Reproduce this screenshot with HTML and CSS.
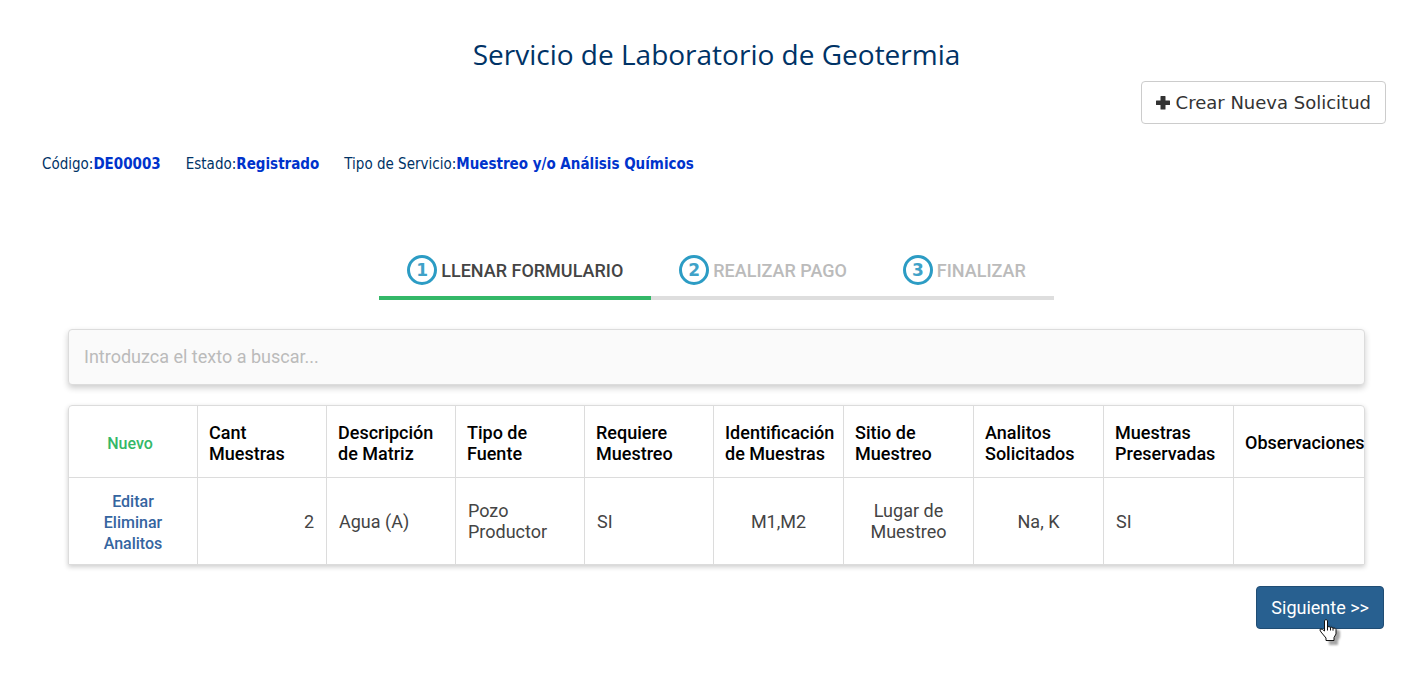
FILE: index.html
```html
<!DOCTYPE html>
<html lang="es">
<head>
    <meta charset="UTF-8">
    <meta name="viewport" content="width=device-width, initial-scale=1.0">
    <title>Servicio de Laboratorio de Geotermia</title>
    <link rel="stylesheet" href="styles.css">
</head>
<body>
    <main class="page">
        <h1>Servicio de Laboratorio de Geotermia</h1>

        <div class="toolbar">
            <button class="btn btn-default" type="button">
                <svg class="icon-plus" viewBox="0 0 14 14" aria-hidden="true"><path d="M5 0h4q.5 0 .5.500v4h4q.5 0 .5.500v3.500q0 .5-.5.500h-4v4q0 .5-.5.500H5q-.5 0-.5-.5V9H.5Q0 9 0 8.500V5q0-.5.500-.5h4v-4Q4.500 0 5 0z"/></svg>
                Crear Nueva Solicitud
            </button>
        </div>

        <div class="info">
            <span>Código:<b>DE00003</b></span>
            <span>Estado:<b>Registrado</b></span>
            <span>Tipo de Servicio:<b>Muestreo y/o Análisis Químicos</b></span>
        </div>

        <div class="content">
            <ol class="steps">
                <li class="step active"><span class="step-num">1</span>LLENAR FORMULARIO</li>
                <li class="step"><span class="step-num">2</span>REALIZAR PAGO</li>
                <li class="step"><span class="step-num">3</span>FINALIZAR</li>
            </ol>

            <input class="search" type="text" aria-label="Buscar" placeholder="Introduzca el texto a buscar...">

            <div class="grid">
                <table>
                    <colgroup>
                        <col class="col-first">
                        <col class="col-a" span="4">
                        <col class="col-b" span="4">
                        <col>
                    </colgroup>
                    <thead>
                        <tr>
                            <th class="center"><a class="new" href="#">Nuevo</a></th>
                            <th>Cant Muestras</th>
                            <th>Descripción de Matriz</th>
                            <th>Tipo de Fuente</th>
                            <th>Requiere Muestreo</th>
                            <th>Identificación de Muestras</th>
                            <th>Sitio de Muestreo</th>
                            <th>Analitos Solicitados</th>
                            <th>Muestras Preservadas</th>
                            <th>Observaciones</th>
                        </tr>
                    </thead>
                    <tbody>
                        <tr>
                            <td class="actions">
                                <a href="#">Editar</a>
                                <a href="#">Eliminar</a>
                                <a href="#">Analitos</a>
                            </td>
                            <td class="number">2</td>
                            <td>Agua (A)</td>
                            <td>Pozo Productor</td>
                            <td>SI</td>
                            <td class="center">M1,M2</td>
                            <td class="center">Lugar de Muestreo</td>
                            <td class="center">Na, K</td>
                            <td>SI</td>
                            <td></td>
                        </tr>
                    </tbody>
                </table>
            </div>
        </div>

        <div class="footer">
            <button class="btn btn-primary" type="button">Siguiente &gt;&gt;
                <svg class="pointer" viewBox="0 0 24 30" aria-hidden="true">
                    <path class="pointer-shadow" d="M9 8v8l-2-2-2 1 5 9v3h9v-4l2-4v-6l-2-1-2-1-3-1-2-1V8z"/>
                    <path class="pointer-hand" d="M5.500 2.500q1.500-2 3 0V9q1.500-1.200 3 .5 1.500-1 2.500.7 2.500-.7 3 1.300V16l-2 3.500v3H7v-2.500L2 14q-2-2.500-.5-3 1.500-.5 4 2z"/>
                    <path class="pointer-line" d="M8.500 9v3.500M11.500 9.500v3M14 10.200v2.500"/>
                </svg>
            </button>
        </div>
    </main>
</body>
</html>
```
FILE: styles.css
```css
* { box-sizing: border-box; }
body { margin: 0; background-color: #fff; font-family: Roboto, Arial, sans-serif; font-size: 18px; color: #444; }
a { text-decoration: none; }

.page { padding: 32px 38px 24px 42px; }

h1 {
    margin: 0 0 5px 5px;
    font-family: "Open Sans", "Noto Sans", sans-serif;
    font-size: 28px;
    font-weight: 400;
    line-height: 44px;
    text-align: center;
    color: #003366;
}

/* Botones */
.btn { height: 43px; padding: 0 14px; border: 1px solid #ccc; border-radius: 4px; cursor: pointer; }
.btn-default {
    display: flex;
    align-items: center;
    gap: 6px;
    background-color: #fff;
    font-family: "DejaVu Sans", Verdana, sans-serif;
    font-size: 18px;
    color: #333;
}
.btn-primary {
    position: relative;
    background-color: #286090;
    border-color: #204d74;
    font-family: Roboto, Arial, sans-serif;
    font-size: 18px;
    color: #fff;
}
.icon-plus { width: 14px; height: 14px; fill: #333; }

.toolbar { display: flex; justify-content: flex-end; }

.info {
    display: flex;
    gap: 25px;
    margin-top: 30px;
    font-family: "DejaVu Sans Condensed", Tahoma, sans-serif;
    font-size: 15px;
    line-height: 20px;
    color: #003366;
}
.info b { color: #0033cc; }

.content { padding: 0 21px 0 26px; }

/* Pasos */
.steps { display: flex; justify-content: center; margin: 81px 0 29px; padding: 0; list-style: none; }
.step {
    display: flex;
    align-items: center;
    gap: 4px;
    padding: 0 28px 11px;
    border-bottom: 4px solid #dedede;
    font-weight: 500;
    color: #bbb;
}
.step.active { border-color: #34b868; color: #444; }
.step-num {
    display: flex;
    align-items: center;
    justify-content: center;
    width: 30px;
    height: 30px;
    border: 3px solid #2c9cc4;
    border-radius: 50%;
    font-family: "DejaVu Sans", Verdana, sans-serif;
    font-size: 17px;
    font-weight: 700;
    color: #3fa2c8;
}

.search {
    display: block;
    width: 100%;
    height: 56px;
    margin-bottom: 20px;
    padding: 0 15px 2px;
    border: 1px solid #dcdcdc;
    border-radius: 4px;
    background-color: #fafafa;
    box-shadow: 0 3px 6px rgba(0, 0, 0, 0.2);
    font-family: Roboto, Arial, sans-serif;
    font-size: 18px;
}
.search::placeholder { color: #bbb; }

/* Tabla */
.grid { border: 1px solid #dcdcdc; border-radius: 4px 4px 0 0; box-shadow: 0 2px 5px rgba(0, 0, 0, 0.2); }
table { width: 100%; border-collapse: separate; border-spacing: 0; table-layout: fixed; }
.col-first { width: 128px; }
.col-a { width: 129px; }
.col-b { width: 130px; }
th, td { padding: 0 12px; line-height: 21px; text-align: left; vertical-align: middle; border-left: 1px solid #dcdcdc; }
th:first-child, td:first-child { border-left: 0; }
th { height: 72px; padding: 2px 0 0 11px; border-bottom: 1px solid #dcdcdc; font-weight: 500; color: #000; }
td { height: 86px; }
.center { text-align: center; }
th.center { padding-right: 17px; }
.number { text-align: right; }
.new { font-size: 16px; color: #34b868; }
.actions { padding-top: 2px; text-align: center; }
.actions a { display: block; font-size: 16px; font-weight: 500; color: #3565a0; }

.footer { display: flex; justify-content: flex-end; margin-top: 21px; padding-right: 2px; }

/* Cursor */
.pointer { position: absolute; right: 40px; bottom: -20px; width: 24px; height: 30px; overflow: visible; }
.pointer-shadow { fill: #000; opacity: 0.35; filter: blur(1px); }
.pointer-hand { fill: #fff; stroke: #111; stroke-width: 1; }
.pointer-line { fill: none; stroke: #111; stroke-width: 1; }
```
